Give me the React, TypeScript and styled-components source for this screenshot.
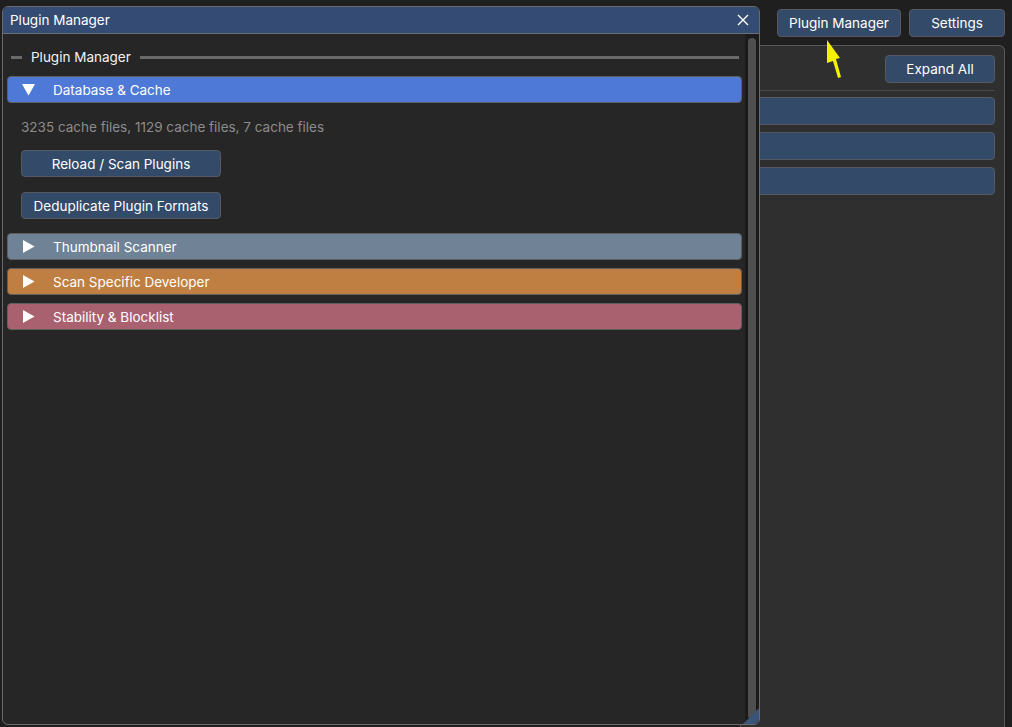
import React from "react";
import styled, { createGlobalStyle } from "styled-components";

const Global = createGlobalStyle`
  html, body { margin: 0; padding: 0; background: #1f1f1f; }
  body { font-family: Inter, "Noto Sans", sans-serif; font-size: 13.5px; color: #fff; overflow: hidden; }
  #root { width: 1012px; height: 727px; }
`;

const Stage = styled.div`
  position: relative;
  width: 1012px;
  height: 727px;
  overflow: hidden;
  background: #1f1f1f;
`;

const Backdrop = styled.div`
  display: flex;
  flex-direction: column;
  height: 100%;
  padding: 9px 7px 0 0;
  box-sizing: border-box;
  gap: 8px;
`;

const TopBar = styled.div`
  display: flex;
  justify-content: flex-end;
  gap: 8px;
`;

const AppButton = styled.button<{ $w: number }>`
  width: ${(p) => p.$w}px;
  height: 28px;
  background: #344a69;
  border: 1px solid #555a62;
  border-radius: 4px;
  color: #fff;
  font-family: Inter, "Noto Sans", sans-serif;
  font-size: 13.5px;
  padding: 0;
  box-sizing: border-box;
`;

const SidePanel = styled.div`
  flex: 1;
  margin-left: 740px;
  background: #2f2f2f;
  border: 1px solid #575757;
  border-bottom: none;
  border-radius: 6px 6px 0 0;
  padding: 9px 9px 0 10px;
  display: flex;
  flex-direction: column;
`;

const PanelTools = styled.div`
  display: flex;
  justify-content: flex-end;
  padding-bottom: 7px;
  border-bottom: 1px solid #4a4a4a;
  margin-bottom: 6px;
`;

const PanelRows = styled.div`
  display: flex;
  flex-direction: column;
  gap: 7px;
`;

const PanelRow = styled.div`
  height: 28px;
  background: #344a69;
  border: 1px solid #555a62;
  border-radius: 4px;
  box-sizing: border-box;
`;

const Window = styled.div`
  position: absolute;
  left: 2px;
  top: 6px;
  width: 758px;
  height: 719px;
  box-sizing: border-box;
  border: 1px solid #6a6a6a;
  border-radius: 6px;
  background: #262626;
  display: flex;
  flex-direction: column;
  overflow: hidden;
`;

const TitleBar = styled.div`
  height: 26px;
  flex: none;
  background: #344b74;
  border-bottom: 1px solid #6a6f78;
  display: flex;
  align-items: center;
  justify-content: space-between;
  padding: 0 9px 0 7px;
  font-size: 13.5px;
  color: #fff;
`;

const CloseBtn = styled.span`
  display: flex;
  width: 14px;
  height: 14px;
  align-items: center;
  justify-content: center;
`;

const WinBody = styled.div`
  flex: 1;
  display: flex;
  min-height: 0;
  position: relative;
`;

const Content = styled.div`
  flex: 1;
  padding: 12px 3px 0 4px;
  display: flex;
  flex-direction: column;
`;

const SepRow = styled.div`
  display: flex;
  align-items: center;
  height: 22px;
  padding: 0 0 0 4px;
  margin-bottom: 8px;
  margin-right: 3px;
`;

const SepLine = styled.div<{ $w?: number }>`
  height: 3px;
  background: #6a6a6a;
  ${(p) => (p.$w ? `width: ${p.$w}px;` : "flex: 1;")}
`;

const SepText = styled.span`
  padding: 0 9px;
  font-size: 13.5px;
  color: #f2f2f2;
`;

const Sections = styled.div`
  display: flex;
  flex-direction: column;
  gap: 8px;
`;

const Header = styled.div<{ $bg: string }>`
  height: 27px;
  box-sizing: border-box;
  background: ${(p) => p.$bg};
  border: 1px solid #5f5f5f;
  border-radius: 4px;
  display: flex;
  align-items: center;
  padding-left: 14px;
  color: #fff;
  font-size: 13.5px;
`;

const Arrow = styled.span`
  width: 13px;
  display: flex;
  align-items: center;
  justify-content: center;
  margin-right: 18px;
`;

const SectionBody = styled.div`
  display: flex;
  flex-direction: column;
  align-items: flex-start;
  padding: 15px 0 6px 14px;
  gap: 13px;
`;

const Info = styled.div`
  color: #8c8c8c;
  font-size: 13.5px;
  line-height: 19px;
`;

const ActionButtons = styled.div`
  display: flex;
  flex-direction: column;
  gap: 15px;
`;

const ActionButton = styled.button`
  width: 200px;
  height: 27px;
  background: #344a69;
  border: 1px solid #555a62;
  border-radius: 4px;
  color: #fff;
  font-family: Inter, "Noto Sans", sans-serif;
  font-size: 13.5px;
  padding: 0;
  box-sizing: border-box;
`;

const ScrollTrack = styled.div`
  width: 14px;
  flex: none;
  background: #1b1b1b;
  padding: 4px 3px 5px 3px;
  box-sizing: border-box;
  display: flex;
`;

const ScrollThumb = styled.div`
  flex: 1;
  background: #4f4f4f;
  border-radius: 4px;
`;

const Grip = styled.div`
  position: absolute;
  right: 0;
  bottom: 0;
  width: 0;
  height: 0;
  border-left: 16px solid transparent;
  border-bottom: 16px solid #3a5479;
`;

const Cursor = styled.svg`
  position: absolute;
  left: 822px;
  top: 38px;
`;

const Tri = ({ open }: { open: boolean }) =>
  open ? (
    <svg width="13" height="12" viewBox="0 0 13 12">
      <polygon points="0,0 13,0 6.5,11.5" fill="#fff" />
    </svg>
  ) : (
    <svg width="12" height="13" viewBox="0 0 12 13">
      <polygon points="0,0 11.5,6.5 0,13" fill="#fff" />
    </svg>
  );

const sections = [
  { title: "Thumbnail Scanner", bg: "#6f8296" },
  { title: "Scan Specific Developer", bg: "#bf7f42" },
  { title: "Stability & Blocklist", bg: "#a9616f" },
];

export default function App() {
  return (
    <>
      <Global />
      <Stage>
        <Backdrop>
          <TopBar>
            <AppButton $w={124}>Plugin Manager</AppButton>
            <AppButton $w={96}>Settings</AppButton>
          </TopBar>
          <SidePanel>
            <PanelTools>
              <AppButton $w={110}>Expand All</AppButton>
            </PanelTools>
            <PanelRows>
              <PanelRow />
              <PanelRow />
              <PanelRow />
            </PanelRows>
          </SidePanel>
        </Backdrop>

        <Window>
          <TitleBar>
            <span>Plugin Manager</span>
            <CloseBtn>
              <svg width="12" height="12" viewBox="0 0 12 12">
                <path d="M1 1 L11 11 M11 1 L1 11" stroke="#fff" strokeWidth="1.4" />
              </svg>
            </CloseBtn>
          </TitleBar>
          <WinBody>
            <Content>
              <SepRow>
                <SepLine $w={11} />
                <SepText>Plugin Manager</SepText>
                <SepLine />
              </SepRow>
              <Sections>
                <div>
                  <Header $bg="#4e79d6">
                    <Arrow>
                      <Tri open />
                    </Arrow>
                    Database &amp; Cache
                  </Header>
                  <SectionBody>
                    <Info>3235 cache files, 1129 cache files, 7 cache files</Info>
                    <ActionButtons>
                      <ActionButton>Reload / Scan Plugins</ActionButton>
                      <ActionButton>Deduplicate Plugin Formats</ActionButton>
                    </ActionButtons>
                  </SectionBody>
                </div>
                {sections.map((s) => (
                  <Header key={s.title} $bg={s.bg}>
                    <Arrow>
                      <Tri open={false} />
                    </Arrow>
                    {s.title}
                  </Header>
                ))}
              </Sections>
            </Content>
            <ScrollTrack>
              <ScrollThumb />
            </ScrollTrack>
            <Grip />
          </WinBody>
        </Window>

        <Cursor width="22" height="42" viewBox="0 0 22 42">
          <polygon points="5,2 18,20 14,21 19,39 16,40 11,23 5,25" fill="#f5f200" />
        </Cursor>
      </Stage>
    </>
  );
}
